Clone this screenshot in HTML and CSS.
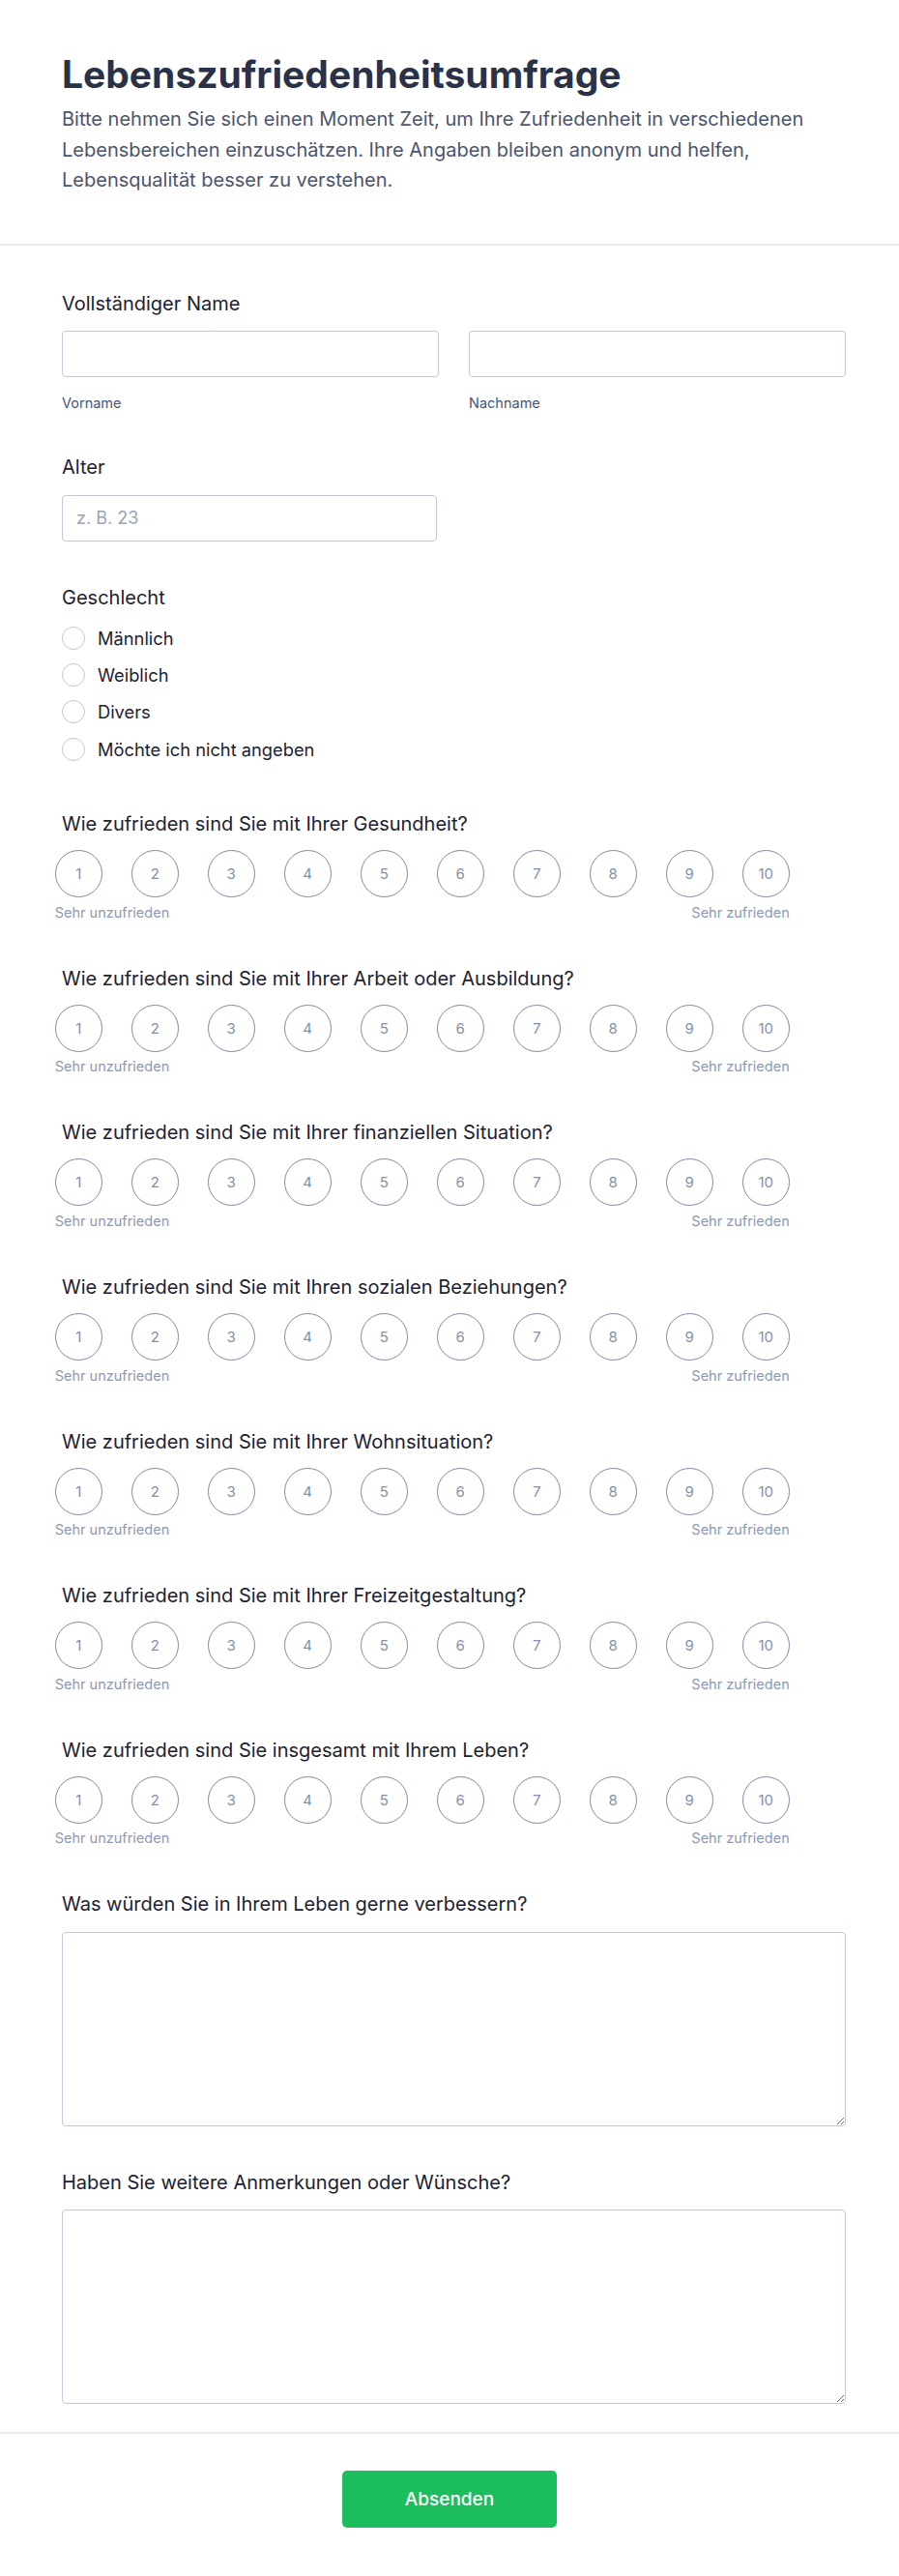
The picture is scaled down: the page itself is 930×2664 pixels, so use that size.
FILE: index.html
```html
<!DOCTYPE html>
<html lang="de">
<head>
<meta charset="utf-8">
<title>Lebenszufriedenheitsumfrage</title>
<link rel="stylesheet" href="styles.css">
</head>
<body>
<header class="header">
  <h1 class="title">Lebenszufriedenheitsumfrage</h1>
  <p class="intro">Bitte nehmen Sie sich einen Moment Zeit, um Ihre Zufriedenheit in verschiedenen Lebensbereichen einzuschätzen. Ihre Angaben bleiben anonym und helfen, Lebensqualität besser zu verstehen.</p>
</header>

<form class="form">
  <div class="field field-name">
    <div class="label">Vollständiger Name</div>
    <div class="name-row">
      <div class="name-col">
        <input class="input" type="text">
        <div class="sublabel">Vorname</div>
      </div>
      <div class="name-col">
        <input class="input" type="text">
        <div class="sublabel">Nachname</div>
      </div>
    </div>
  </div>

  <div class="field">
    <div class="label">Alter</div>
    <input class="input input-age" type="text" placeholder="z. B. 23">
  </div>

  <div class="field field-gender">
    <div class="label">Geschlecht</div>
    <div class="radios">
      <label class="radio"><span class="radio-dot"></span>Männlich</label>
      <label class="radio"><span class="radio-dot"></span>Weiblich</label>
      <label class="radio"><span class="radio-dot"></span>Divers</label>
      <label class="radio"><span class="radio-dot"></span>Möchte ich nicht angeben</label>
    </div>
  </div>

  <div class="field rating">
    <div class="label label-q">Wie zufrieden sind Sie mit Ihrer Gesundheit?</div>
    <div class="scale">
      <div class="circles"><span class="c">1</span><span class="c">2</span><span class="c">3</span><span class="c">4</span><span class="c">5</span><span class="c">6</span><span class="c">7</span><span class="c">8</span><span class="c">9</span><span class="c">10</span></div>
      <div class="ends"><span>Sehr unzufrieden</span><span>Sehr zufrieden</span></div>
    </div>
  </div>

  <div class="field rating">
    <div class="label label-q">Wie zufrieden sind Sie mit Ihrer Arbeit oder Ausbildung?</div>
    <div class="scale">
      <div class="circles"><span class="c">1</span><span class="c">2</span><span class="c">3</span><span class="c">4</span><span class="c">5</span><span class="c">6</span><span class="c">7</span><span class="c">8</span><span class="c">9</span><span class="c">10</span></div>
      <div class="ends"><span>Sehr unzufrieden</span><span>Sehr zufrieden</span></div>
    </div>
  </div>

  <div class="field rating">
    <div class="label label-q">Wie zufrieden sind Sie mit Ihrer finanziellen Situation?</div>
    <div class="scale">
      <div class="circles"><span class="c">1</span><span class="c">2</span><span class="c">3</span><span class="c">4</span><span class="c">5</span><span class="c">6</span><span class="c">7</span><span class="c">8</span><span class="c">9</span><span class="c">10</span></div>
      <div class="ends"><span>Sehr unzufrieden</span><span>Sehr zufrieden</span></div>
    </div>
  </div>

  <div class="field rating">
    <div class="label label-q">Wie zufrieden sind Sie mit Ihren sozialen Beziehungen?</div>
    <div class="scale">
      <div class="circles"><span class="c">1</span><span class="c">2</span><span class="c">3</span><span class="c">4</span><span class="c">5</span><span class="c">6</span><span class="c">7</span><span class="c">8</span><span class="c">9</span><span class="c">10</span></div>
      <div class="ends"><span>Sehr unzufrieden</span><span>Sehr zufrieden</span></div>
    </div>
  </div>

  <div class="field rating">
    <div class="label label-q">Wie zufrieden sind Sie mit Ihrer Wohnsituation?</div>
    <div class="scale">
      <div class="circles"><span class="c">1</span><span class="c">2</span><span class="c">3</span><span class="c">4</span><span class="c">5</span><span class="c">6</span><span class="c">7</span><span class="c">8</span><span class="c">9</span><span class="c">10</span></div>
      <div class="ends"><span>Sehr unzufrieden</span><span>Sehr zufrieden</span></div>
    </div>
  </div>

  <div class="field rating">
    <div class="label label-q">Wie zufrieden sind Sie mit Ihrer Freizeitgestaltung?</div>
    <div class="scale">
      <div class="circles"><span class="c">1</span><span class="c">2</span><span class="c">3</span><span class="c">4</span><span class="c">5</span><span class="c">6</span><span class="c">7</span><span class="c">8</span><span class="c">9</span><span class="c">10</span></div>
      <div class="ends"><span>Sehr unzufrieden</span><span>Sehr zufrieden</span></div>
    </div>
  </div>

  <div class="field rating">
    <div class="label label-q">Wie zufrieden sind Sie insgesamt mit Ihrem Leben?</div>
    <div class="scale">
      <div class="circles"><span class="c">1</span><span class="c">2</span><span class="c">3</span><span class="c">4</span><span class="c">5</span><span class="c">6</span><span class="c">7</span><span class="c">8</span><span class="c">9</span><span class="c">10</span></div>
      <div class="ends"><span>Sehr unzufrieden</span><span>Sehr zufrieden</span></div>
    </div>
  </div>

  <div class="field field-text">
    <div class="label">Was würden Sie in Ihrem Leben gerne verbessern?</div>
    <textarea class="textarea"></textarea>
  </div>

  <div class="field">
    <div class="label">Haben Sie weitere Anmerkungen oder Wünsche?</div>
    <textarea class="textarea"></textarea>
  </div>
</form>

<footer class="footer">
  <button class="submit" type="button">Absenden</button>
</footer>
</body>
</html>
```

FILE: styles.css
```css
* { box-sizing: border-box; }

html, body {
  margin: 0;
  padding: 0;
  background: #ffffff;
}

body {
  font-family: Inter, "Noto Sans", "Liberation Sans", sans-serif;
  color: #1a202c;
}

.header {
  padding: 54px 55px 49px 64px;
  border-bottom: 2px solid #e8eaf0;
}

.title {
  margin: 0;
  font-size: 39px;
  line-height: 1.2;
  font-weight: 700;
  color: #2a3247;
}

.intro {
  margin: 7.5px 0 0;
  font-size: 20px;
  line-height: 31.5px;
  color: #4a5570;
}

.form {
  display: flex;
  flex-direction: column;
  gap: 44px;
  padding: 46px 55px 29px 64px;
  border-bottom: 2px solid #e8eaf0;
}

.field {
  display: flex;
  flex-direction: column;
}

.field-name {
  margin-bottom: 1px;
}

.field-gender {
  margin-bottom: 3px;
}

.field-text {
  margin-top: 3px;
}

.label {
  font-size: 20px;
  line-height: 28px;
  font-weight: 400;
  color: #1c2233;
  margin-bottom: 14.5px;
}

.label-q {
  padding-top: 3px;
  margin-bottom: 13px;
}

.name-row {
  display: flex;
  gap: 31px;
}

.name-col {
  flex: 1;
  display: flex;
  flex-direction: column;
}

.input {
  height: 48px;
  width: 100%;
  border: 1px solid #c3c9d8;
  border-radius: 4px;
  padding: 0 14px;
  font-family: inherit;
  font-size: 18px;
  color: #1a202c;
  background: #fff;
  outline: none;
}

.input::placeholder {
  color: #9aa4b8;
}

.input-age {
  width: 388px;
}

.sublabel {
  margin-top: 20px;
  font-size: 14.5px;
  line-height: 14px;
  color: #4a5570;
}

.radios {
  display: flex;
  flex-direction: column;
  gap: 11.3px;
}

.radio {
  display: flex;
  align-items: center;
  gap: 13px;
  height: 27px;
  font-size: 18.3px;
  color: #1c2233;
}

.radio-dot {
  width: 24px;
  height: 24px;
  border-radius: 50%;
  border: 1.5px solid #c3c8d6;
  flex: none;
}

.scale {
  display: flex;
  flex-direction: column;
  align-self: flex-start;
  margin-left: -7.3px;
}

.circles {
  display: flex;
  gap: 30px;
}

.c {
  width: 49px;
  height: 49px;
  border-radius: 50%;
  border: 1.5px solid #7f89a6;
  display: flex;
  align-items: center;
  justify-content: center;
  font-size: 15px;
  color: #8390ac;
}

.ends {
  display: flex;
  justify-content: space-between;
  margin-top: 8.6px;
  font-size: 14.5px;
  line-height: 14px;
  color: #8c99b4;
}

.textarea {
  display: block;
  width: 100%;
  height: 201px;
  border: 1px solid #c3c9d8;
  border-radius: 4px;
  font-family: inherit;
  font-size: 18px;
  padding: 12px 14px;
  resize: vertical;
  outline: none;
}

.footer {
  display: flex;
  justify-content: center;
  padding: 38px 0 48px;
}

.submit {
  width: 222px;
  height: 59px;
  border: none;
  border-radius: 5px;
  background: #1bbd5c;
  color: #ffffff;
  font-family: inherit;
  font-size: 19px;
  font-weight: 500;
}
```
